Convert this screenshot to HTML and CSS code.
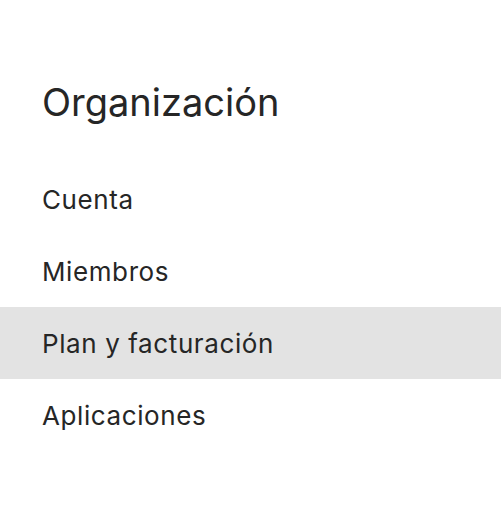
FILE: index.html
```html
<!DOCTYPE html>
<html lang="es">
<head>
<meta charset="utf-8">
<link rel="stylesheet" href="styles.css">
</head>
<body>
<nav class="sidebar">
  <h1 class="title">Organización</h1>
  <ul class="menu">
    <li class="item">Cuenta</li>
    <li class="item">Miembros</li>
    <li class="item active">Plan y facturación</li>
    <li class="item">Aplicaciones</li>
  </ul>
</nav>
</body>
</html>
```
FILE: styles.css
```css
html, body {
  margin: 0;
  padding: 0;
  background: #ffffff;
}
body {
  font-family: Inter, "Noto Sans", sans-serif;
  color: #262626;
}
.sidebar {
  width: 501px;
  padding-top: 77px;
}
.title {
  margin: 0 0 36px 0;
  padding-left: 42px;
  font-size: 38px;
  font-weight: 400;
  line-height: 50px;
}
.menu {
  list-style: none;
  margin: 0;
  padding: 0;
}
.item {
  height: 72px;
  display: flex;
  align-items: center;
  padding-left: 42px;
  font-size: 26px;
  letter-spacing: 0.6px;
}
.item.active {
  background: #e3e3e3;
}
```
